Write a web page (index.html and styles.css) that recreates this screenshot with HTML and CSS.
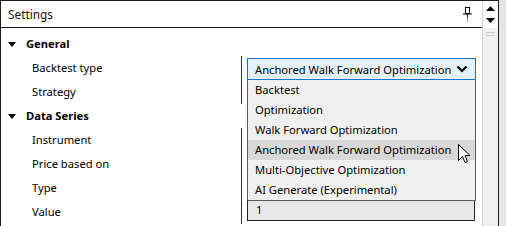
FILE: index.html
```html
<!DOCTYPE html>
<html>
<head>
<meta charset="utf-8">
<link rel="stylesheet" href="styles.css">
</head>
<body>
<div class="page">
  <div class="panel">
    <div class="main">
      <div class="header">
        <span class="title">Settings</span>
        <svg class="pin" width="9" height="16" viewBox="0 0 9 16">
          <rect x="2.5" y="0.5" width="4" height="6" fill="none" stroke="#000"/>
          <line x1="0" y1="7" x2="9" y2="7" stroke="#000"/>
          <line x1="4.5" y1="7" x2="4.5" y2="11" stroke="#222"/>
          <line x1="4.5" y1="11" x2="4.5" y2="15" stroke="#999"/>
        </svg>
      </div>
      <div class="grid">
        <div class="cat"><span class="tri"></span>General</div>
        <div class="row"><div class="name">Backtest type</div><div class="val"><div class="combo"><span>Anchored Walk Forward Optimization</span><svg class="chev" width="12" height="8" viewBox="0 0 12 8"><polyline points="1.5,1.5 6,6 10.5,1.5" fill="none" stroke="#000" stroke-width="2.2"/></svg></div></div></div>
        <div class="row"><div class="name">Strategy</div><div class="val"></div></div>
        <div class="cat"><span class="tri"></span>Data Series</div>
        <div class="row"><div class="name">Instrument</div><div class="val"></div></div>
        <div class="row"><div class="name">Price based on</div><div class="val"></div></div>
        <div class="row"><div class="name">Type</div><div class="val"></div></div>
        <div class="row"><div class="name">Value</div><div class="val"><div class="box">1</div></div></div>
        <div class="list">
          <div class="item">Backtest</div>
          <div class="item">Optimization</div>
          <div class="item">Walk Forward Optimization</div>
          <div class="item sel">Anchored Walk Forward Optimization</div>
          <div class="item">Multi-Objective Optimization</div>
          <div class="item">AI Generate (Experimental)</div>
        </div>
        <svg class="cursor" width="13" height="20" viewBox="0 0 13 20">
          <path d="M0.5,0.5 L0.5,16.5 L4.5,12.5 L7,18.5 L9.5,17.5 L7,11.5 L12,11.5 Z" fill="#fff" stroke="#000" stroke-width="1" stroke-linejoin="miter"/>
        </svg>
      </div>
    </div>
    <div class="side">
      <div class="spin">
        <svg width="9" height="5" viewBox="0 0 9 5"><polygon points="0,5 9,5 4.5,0" fill="#000"/></svg>
        <svg width="9" height="5" viewBox="0 0 9 5"><polygon points="0,0 9,0 4.5,5" fill="#000"/></svg>
      </div>
      <div class="track">
        <div class="thumb"><span class="g"></span><span class="g"></span></div>
      </div>
    </div>
  </div>
  <div class="edge"></div>
</div>
</body>
</html>
```
FILE: styles.css
```css
html, body {
  margin: 0;
  padding: 0;
  background: #e6e6e6;
}
body {
  font-family: "Noto Sans", "Open Sans", sans-serif;
  font-size: 11.2px;
  color: #000;
  white-space: nowrap;
}
.page {
  display: flex;
  width: 506px;
  height: 226px;
  overflow: hidden;
}
.panel {
  width: 499px;
  flex: none;
  box-sizing: border-box;
  border-left: 1px solid #1e1e1e;
  border-top: 1px solid #1e1e1e;
  border-right: 1px solid #1e1e1e;
  background: #fff;
  display: flex;
  height: 240px;
}
.main {
  width: 481px;
  flex: none;
  display: flex;
  flex-direction: column;
}
.header {
  height: 26px;
  border-bottom: 1px solid #1e1e1e;
  display: flex;
  align-items: center;
  padding-left: 7px;
}
.title {
  flex: 1;
  font-size: 11.8px;
  color: #111;
}
.pin {
  margin-right: 10px;
  margin-top: 1px;
}
.grid {
  position: relative;
  padding-top: 4px;
  display: flex;
  flex-direction: column;
}
.cat {
  height: 24px;
  line-height: 24px;
  display: flex;
  align-items: center;
  padding-left: 7px;
  font-weight: 700;
}
.tri {
  width: 0;
  height: 0;
  border-left: 4px solid transparent;
  border-right: 4px solid transparent;
  border-top: 5px solid #000;
  margin-right: 10px;
}
.row {
  height: 24px;
  display: flex;
}
.name {
  width: 241px;
  box-sizing: border-box;
  border-right: 1px solid #333;
  padding-left: 31px;
  line-height: 24px;
}
.val {
  flex: 1;
  padding-left: 5px;
}
.combo {
  margin-top: 2px;
  width: 229px;
  height: 22px;
  box-sizing: border-box;
  border: 1px solid #0078d7;
  background: #e5f1fb;
  display: flex;
  align-items: center;
  padding-left: 7px;
  padding-right: 7px;
}
.combo span {
  flex: 1;
}
.box {
  margin-top: -1px;
  width: 228px;
  height: 22px;
  box-sizing: border-box;
  border: 1px solid #222;
  background: #e8e8e8;
  line-height: 20px;
  padding-left: 8px;
}
.list {
  position: absolute;
  left: 246px;
  top: 52px;
  width: 229px;
  box-sizing: border-box;
  border: 1px solid #5a5a5a;
  border-top: none;
  background: #f0f0f0;
}
.item {
  height: 20px;
  line-height: 20px;
  padding-left: 7px;
}
.item.sel {
  background: #d8d8d8;
}
.cursor {
  position: absolute;
  left: 457px;
  top: 116px;
}
.side {
  flex: 1;
  border-left: 1px solid #d4d4d4;
  display: flex;
  flex-direction: column;
}
.spin {
  height: 27px;
  display: flex;
  flex-direction: column;
  align-items: center;
  justify-content: center;
  gap: 7px;
  background: #fff;
}
.track {
  flex: 1;
  background: #f0f0f0;
  padding: 1px 1px;
}
.thumb {
  display: flex;
  flex-direction: column;
  gap: 2px;
  padding: 3px 2px;
}
.g {
  height: 1px;
  background: #c9c9c9;
}
.edge {
  flex: 1;
  background: #e6e6e6;
}
```
